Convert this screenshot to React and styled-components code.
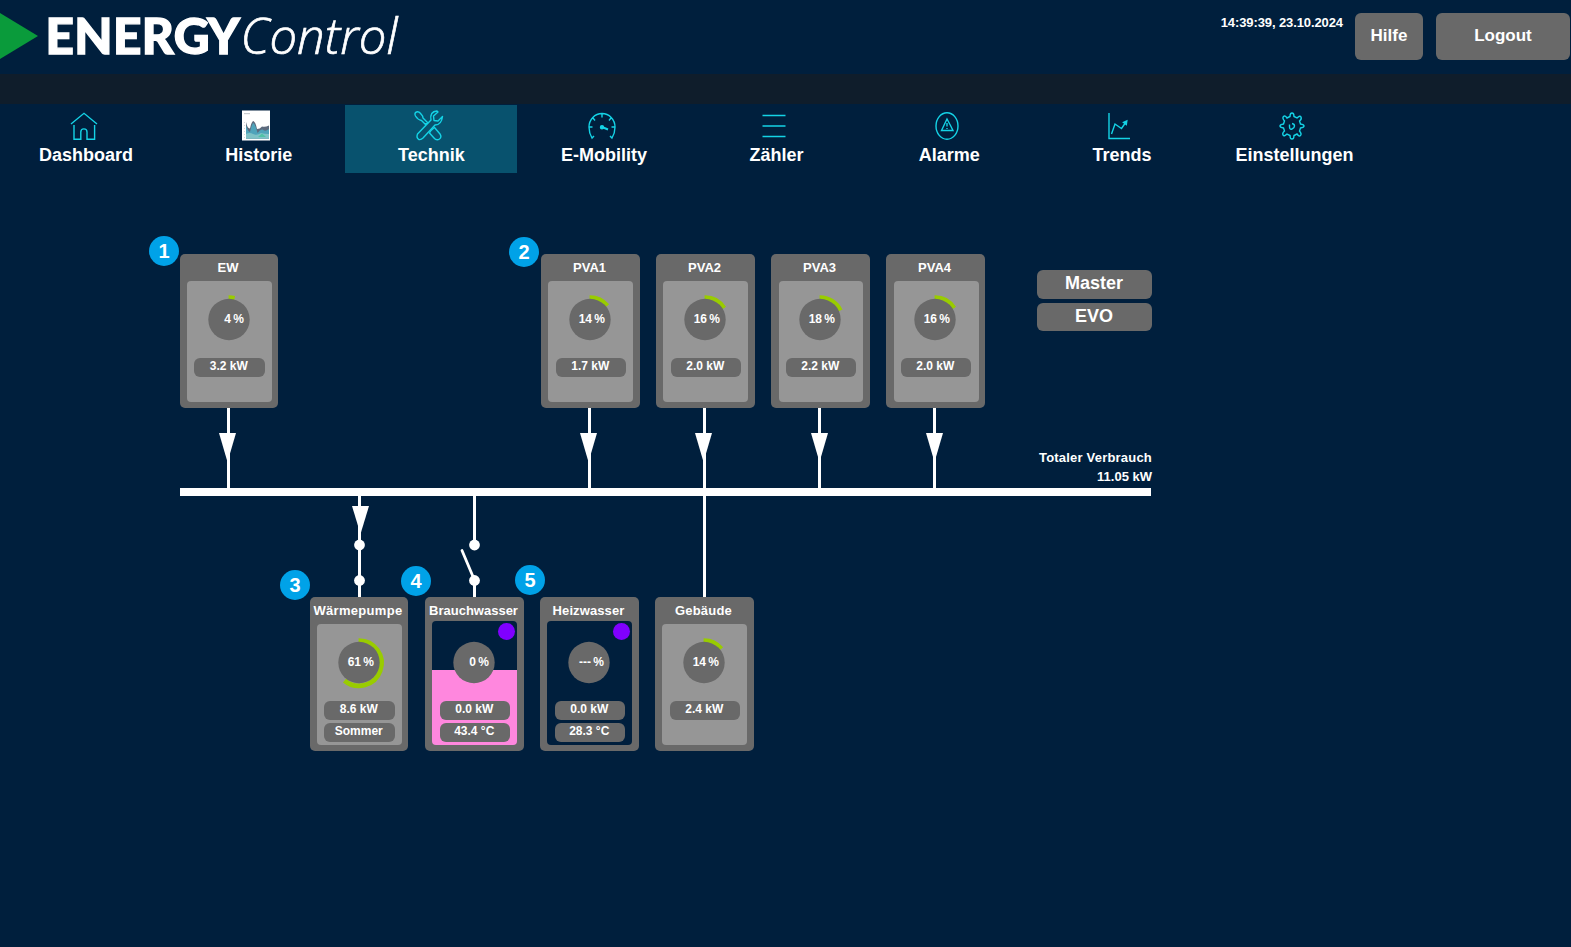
import React from "react";
import styled, { createGlobalStyle } from "styled-components";

const c = {
  bg: "#001f3d", band: "#0f1d2b", active: "#08526e", cyan: "#14d3e6",
  gray: "#696969", panel: "#969696", lime: "#99cc00", pink: "#ff87de",
  purple: "#8000ff", badge: "#00a2e8", green: "#0a9b3b",
};

const GlobalStyle = createGlobalStyle`
  * { box-sizing: border-box; }
  body {
    margin: 0;
    background: ${c.bg};
    color: #fff;
    font-family: "Liberation Sans", Arial, sans-serif;
    font-weight: 700;
    overflow: hidden;
  }
  button { font: inherit; color: inherit; border: 0; padding: 0; margin: 0; }
`;

const Page = styled.div`
  width: 1571px;
  height: 947px;
  display: flex;
  flex-direction: column;
`;
const Header = styled.header`
  height: 74px;
  flex: none;
  display: flex;
  align-items: flex-start;
  justify-content: space-between;
`;
const LogoSvg = styled.svg`
  display: block;
  width: 420px;
  height: 74px;
`;
const HeaderRight = styled.div`
  display: flex;
  padding: 13px 1px 0 0;
`;
const Clock = styled.time`
  font-size: 13px;
  line-height: 19px;
  letter-spacing: -0.1px;
  margin-right: 12px;
`;
const HeaderButton = styled.button`
  width: ${(p) => p.$width}px;
  height: 47px;
  margin-left: ${(p) => p.$gap || 0}px;
  padding-bottom: 1px;
  border-radius: 6px;
  background: ${c.gray};
  font-size: 17px;
`;
const Band = styled.div`
  height: 30px;
  flex: none;
  background: ${c.band};
`;
const Nav = styled.nav`
  display: flex;
  gap: 0.67px;
  flex: none;
  height: 69px;
  padding-top: 1px;
`;
const Tab = styled.a`
  width: 172px;
  height: 68px;
  display: flex;
  flex-direction: column;
  align-items: center;
  background: ${(p) => (p.$active ? c.active : "transparent")};
  font-size: 18px;
  line-height: 20px;
`;
const TabIcon = styled.svg`
  display: block;
  width: 36px;
  height: 36px;
  margin: 3px ${(p) => p.$shift}px 1px 0;
  fill: none;
  stroke: ${c.cyan};
  stroke-width: 1.4;
`;
const Canvas = styled.main`
  position: relative;
  flex: 1;
`;
const Wires = styled.svg`
  position: absolute;
  inset: 0;
  width: 1200px;
  height: 600px;
  fill: #fff;
  stroke: none;
`;
const Node = styled.section`
  position: absolute;
  left: ${(p) => p.$x}px;
  top: ${(p) => p.$y}px;
  width: ${(p) => p.$w}px;
  height: 154px;
  display: flex;
  flex-direction: column;
  border-radius: 5px;
  background: ${c.gray};
`;
const NodeTitle = styled.h2`
  margin: 0;
  height: ${(p) => (p.$tank ? 24 : 27)}px;
  padding: 5px 2px 0 0;
  display: flex;
  justify-content: center;
  white-space: nowrap;
  font-size: 13px;
  line-height: 17px;
  letter-spacing: ${(p) => p.$tracking || 0}px;
`;
const NodeBody = styled.div`
  position: relative;
  width: ${(p) => p.$w}px;
  height: ${(p) => (p.$tank ? 124 : 121)}px;
  margin-left: ${(p) => p.$inset}px;
  padding-top: ${(p) => (p.$tank ? 14 : 11)}px;
  display: flex;
  flex-direction: column;
  align-items: flex-start;
  border-radius: 4px;
  overflow: hidden;
  background: ${(p) =>
    p.$tank ? `linear-gradient(${c.bg} ${p.$level}px, ${c.pink} ${p.$level}px)` : c.panel};
`;
const StatusDot = styled.i`
  position: absolute;
  top: 2px;
  right: 2px;
  width: 17px;
  height: 17px;
  border-radius: 50%;
  background: ${c.purple};
`;
const Dial = styled.svg`
  position: relative;
  display: block;
  width: 54px;
  height: 54px;
  flex: none;
  margin: 0 0 12px ${(p) => p.$offset}px;
  overflow: visible;
`;
const DialText = styled.text`
  font-size: 12px;
  fill: #fff;
`;
const Pill = styled.div`
  position: relative;
  width: ${(p) => p.$w}px;
  height: 19px;
  flex: none;
  margin: 0 0 3px ${(p) => p.$offset}px;
  padding-right: 1.5px;
  border-radius: 6px;
  background: ${c.gray};
  font-size: 12px;
  line-height: 16px;
  text-align: center;
`;
const Badge = styled.span`
  position: absolute;
  left: ${(p) => p.$x - 15}px;
  top: ${(p) => p.$y - 15}px;
  width: 30px;
  height: 30px;
  border-radius: 50%;
  background: ${c.badge};
  font-size: 20px;
  line-height: 31px;
  text-align: center;
`;
const ModeButtons = styled.div`
  position: absolute;
  left: 1037px;
  top: 97px;
  width: 115px;
  display: flex;
  flex-direction: column;
  gap: 4px;
`;
const ModeButton = styled.button`
  height: ${(p) => p.$height}px;
  padding: 0 1px 3px 0;
  border-radius: 6px;
  background: ${c.gray};
  font-size: 18px;
  line-height: 20px;
`;
const Total = styled.div`
  position: absolute;
  right: 419px;
  top: 275px;
  text-align: right;
  font-size: 13px;
  line-height: 19px;
`;
const TotalLabel = styled.div`
  letter-spacing: 0.2px;
`;

function Logo() {
  return (
    <LogoSvg viewBox="0 0 420 74">
      <path d="M0 13L38 36L0 59Z" fill={c.green} />
      <text x="45.5 74.3 113 141.7 173.7 207.3" y="53.8" fill="#fff" stroke="#fff" strokeWidth="1.4" fontFamily="Lato, sans-serif" fontSize="49.5" fontWeight="900">ENERGY</text>
      <text x="240.5" y="54.3" fill="#fff" stroke="#fff" strokeWidth="0.7" fontFamily="'Open Sans', sans-serif" fontSize="49.5" fontWeight="300" fontStyle="italic" textLength="157" lengthAdjust="spacingAndGlyphs">Control</text>
    </LogoSvg>
  );
}

const icons = {
  home: <path d="M5 16L18 5.3L31 16M8 17V31.3H14.8V24a3.1 3.1 0 0 1 6.2 0V31.3H28.6V17" />,
  history: (
    <g stroke="none">
      <rect x="4" y="2.5" width="28" height="30" fill="#fff" />
      <rect x="6" y="5" width="6" height="1.2" fill="#c9cdd0" />
      <path d="M6.5 14V30" stroke="#d5dadd" strokeWidth="1" strokeDasharray="1 2" />
      <path d="M8 14Q9.500 21 12 20.500Q13.500 13 15.500 13Q17.500 14 19 21Q22 21 24 18.500Q27 19.500 31 17.500V30.500H8Z" fill="#5d6a7d" />
      <path d="M8 17Q10 24 12 24Q14 15 15.500 15Q17.500 17 19.500 25Q22 21 24.500 21.500Q27 24 31 21V30.500H8Z" fill="#4fa3ba" />
      <path d="M8 26Q12 24 15 26Q19 28 23 25Q26 26 31 26V30.500H8Z" fill="#7fc2c6" />
      <path d="M20 29L24 25.500L28 29Z" fill="#4fc3a5" />
    </g>
  ),
  tools: (
    <g strokeLinejoin="round">
      <path d="M4.500 8Q3 5 5.500 4Q8 3 10 6Q12 8 12 10L16.500 14.500L14.500 16.500L10.500 12.500Q7 12 4.500 8Z" />
      <path d="M20 22.500L23.500 19.500L29 26Q31 29 28.500 31Q25.500 33 23 30L18.500 25Z" />
      <path d="M26 3Q18.500 3.500 20 12L6.500 26Q5 30 8 31.500Q10 32 12 30L24 17Q30.500 17 31.500 8.500L27 13L23 12.500L22.500 8L27 4Z" />
    </g>
  ),
  gauge: (
    <g>
      <path d="M10 28L8 30Q5 25 5 19A13 13.500 0 0 1 31 19Q31 25 28 30L26 28M18 5.500V9.500M9 10L11 12.500M27 10L25 12.500M5 19H8.500M31 19H27.500" />
      <path d="M18 19L24 21.500" strokeWidth="2" />
      <circle cx="18" cy="19.300" r="1.500" fill={c.cyan} />
    </g>
  ),
  lines: <path d="M6.500 7.500H29.500M6.500 18H29.500M6.500 28.500H29.500" strokeWidth="1.500" />,
  alarm: (
    <g>
      <ellipse cx="18" cy="18" rx="11" ry="13.200" />
      <path d="M21.500 17.500L24 22.500H12.500L18 11L21.500 17.500M18 15V18.500M18 20V21" />
    </g>
  ),
  trend: (
    <g>
      <path d="M8 5V30.500H29M10.500 26L14 16L20.500 20.500L25 14" />
      <path d="M22.500 14.500L25.800 13L25.300 16.500Z" fill={c.cyan} />
    </g>
  ),
  gear: (
    <g>
      <path d="M16 8.500Q16 5 18 5T20 8.500L23 10Q26 7 27 9T25.500 13L26.500 16Q30 16.500 30 18T26.500 20L25.500 23Q28 26 26.500 27.500T23 26L20 27.500Q20 31 18 31T16 27.500L13 26Q10 29 9 27T10.500 23L9.500 20Q6 19.500 6 18T9.500 16L10.500 13Q8 10 9.500 8.500T13 10Z" />
      <path d="M18 15.500Q20.500 16 20.500 18T18 21T15.500 18.500V16.500" />
    </g>
  ),
};

const tabs = [
  ["Dashboard", "home", 4], ["Historie", "history", 4.5], ["Technik", "tools", 4],
  ["E-Mobility", "gauge", 4.5], ["Zähler", "lines", 5.5], ["Alarme", "alarm", 4],
  ["Trends", "trend", 6], ["Einstellungen", "gear", 5],
];

function Gauge({ value, offset }) {
  const n = Number(value) || 0;
  const a = (n / 100) * Math.PI * 2;
  const r = 22.6;
  const cx = 26.9;
  const x = cx + r * Math.sin(a);
  const y = 28.2 - r * Math.cos(a);
  return (
    <Dial viewBox="0 0 54 54" $offset={offset}>
      {n > 0 && (
        <path d={`M${cx - 0.3} ${28.2 - r}A${r} ${r} 0 ${n > 50 ? 1 : 0} 1 ${x} ${y}`} fill="none" stroke={c.lime} strokeWidth="4.800" />
      )}
      <circle cx="27" cy="27.500" r="20.700" fill={c.gray} />
      <DialText x="29" y="31" textAnchor="end">{value}</DialText>
      <DialText x="31.200" y="31">%</DialText>
    </Dial>
  );
}

const nodes = [
  { name: "EW", x: 180, y: 81, w: 98, pct: "4", values: ["3.2 kW"] },
  { name: "PVA1", x: 541, y: 81, pct: "14", values: ["1.7 kW"] },
  { name: "PVA2", x: 656, y: 81, pct: "16", values: ["2.0 kW"] },
  { name: "PVA3", x: 771, y: 81, inset: 8, bodyWidth: 84, pct: "18", values: ["2.2 kW"] },
  { name: "PVA4", x: 886, y: 81, inset: 8, pct: "16", values: ["2.0 kW"] },
  { name: "Wärmepumpe", x: 310, y: 424, w: 98, tracking: 0.3, pct: "61", values: ["8.6 kW", "Sommer"] },
  { name: "Brauchwasser", x: 425, y: 424, tank: true, level: 49, pct: "0", values: ["0.0 kW", "43.4 °C"] },
  { name: "Heizwasser", x: 540, y: 424, tank: true, level: 124, tracking: 0.1, pct: "---", values: ["0.0 kW", "28.3 °C"] },
  { name: "Gebäude", x: 655, y: 424, tracking: 0.2, pct: "14", values: ["2.4 kW"] },
];

const badges = [[164, 78], [524, 79], [295, 412], [416, 408], [530, 407]];

function PowerNode({ node }) {
  const { x, y, w = 99, inset = 7, bodyWidth = 85, tank, level, tracking } = node;
  const pillWidth = w === 98 ? 71 : 70;
  const pillOffset = (w === 98 ? 14 : 15) - inset;
  return (
    <Node $x={x} $y={y} $w={w}>
      <NodeTitle $tank={tank} $tracking={tracking}>{node.name}</NodeTitle>
      <NodeBody $tank={tank} $level={level} $inset={inset} $w={bodyWidth}>
        {tank && <StatusDot />}
        <Gauge value={node.pct} offset={22 - inset} />
        {node.values.map((v) => <Pill key={v} $w={pillWidth} $offset={pillOffset}>{v}</Pill>)}
      </NodeBody>
    </Node>
  );
}

function BusWires() {
  return (
    <Wires viewBox="0 0 1200 600">
      <rect x="180" y="315" width="971" height="8" />
      {[227, 588, 703, 818, 933].map((x, i) => (
        <g key={x}>
          <rect x={x} y="234" width="3" height="82" />
          <path d={`M${x - 8 + (i > 2 ? 1 : 0)} 260h17l-8.500 29z`} />
        </g>
      ))}
      <rect x="703" y="322" width="3" height="103" />
      <rect x="358" y="322" width="3" height="103" />
      <path d="M352 333h17l-8.500 28z" />
      <circle cx="359.500" cy="372" r="5.400" />
      <circle cx="359.500" cy="407.500" r="5.400" />
      <rect x="473" y="322" width="3" height="50" />
      <rect x="473" y="407" width="3" height="18" />
      <circle cx="474.500" cy="372" r="5.400" />
      <circle cx="474.500" cy="407.500" r="5.400" />
      <path d="M462 377.500L474 406" stroke="#fff" strokeWidth="2.800" strokeLinecap="round" />
    </Wires>
  );
}

export default function App() {
  return (
    <Page>
      <GlobalStyle />
      <Header>
        <Logo />
        <HeaderRight>
          <Clock>14:39:39, 23.10.2024</Clock>
          <HeaderButton $width={68}>Hilfe</HeaderButton>
          <HeaderButton $width={134} $gap={13}>Logout</HeaderButton>
        </HeaderRight>
      </Header>
      <Band />
      <Nav>
        {tabs.map(([label, icon, shift]) => (
          <Tab key={label} $active={label === "Technik"}>
            <TabIcon viewBox="0 0 36 36" $shift={shift}>{icons[icon]}</TabIcon>
            {label}
          </Tab>
        ))}
      </Nav>
      <Canvas>
        <BusWires />
        {nodes.map((n) => <PowerNode key={n.name} node={n} />)}
        {badges.map(([x, y], i) => <Badge key={i} $x={x} $y={y}>{i + 1}</Badge>)}
        <ModeButtons>
          <ModeButton $height={29}>Master</ModeButton>
          <ModeButton $height={28}>EVO</ModeButton>
        </ModeButtons>
        <Total>
          <TotalLabel>Totaler Verbrauch</TotalLabel>
          <div>11.05 kW</div>
        </Total>
      </Canvas>
    </Page>
  );
}
